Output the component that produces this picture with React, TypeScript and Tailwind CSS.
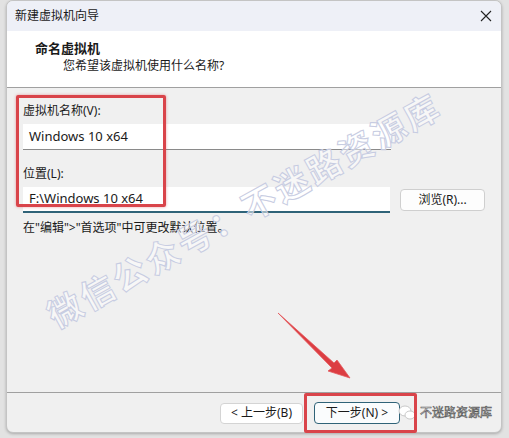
import React from "react";

const font = "font-['Noto_Sans','Noto_Sans_CJK_SC',sans-serif]";

const WizardDialog = () => {
  return (
    <div className={`relative w-[509px] h-[438px] bg-[#e2e2e2] pl-[6px] pr-[7px] pb-[5px] overflow-hidden ${font} text-[#1a1a1a]`}>
      <div className="flex flex-col h-full rounded-[7px] border border-[#c4c4c4] bg-[#f0f0f0] overflow-hidden shadow-[0_1px_3px_rgba(0,0,0,0.25)]">
        {/* title bar */}
        <div className="h-[30px] shrink-0 flex items-center justify-between bg-[#eef0f7] pl-[8px] pr-[9px]">
          <span className="text-[12px]">新建虚拟机向导</span>
          <svg width="12" height="12" viewBox="0 0 12 12" className="text-[#222]">
            <path d="M1 1 L11 11 M11 1 L1 11" stroke="currentColor" strokeWidth="1.1" />
          </svg>
        </div>

        {/* header */}
        <div className="h-[57px] shrink-0 bg-white border-b border-[#a0a0a0] pl-[28px] pt-[8px]">
          <div className="text-[13px] font-bold leading-[18px]">命名虚拟机</div>
          <div className="text-[12px] leading-[17px] pl-[28px]">您希望该虚拟机使用什么名称?</div>
        </div>

        {/* body */}
        <div className="flex-1 px-[16px] pt-[14px]">
          <div className="text-[12px] leading-[18px]">虚拟机名称(V):</div>
          <div className="mt-[4px] w-[368px] h-[26px] bg-white border-b border-[#8a8a8a] flex items-center pl-[6px] text-[13px]">
            Windows 10 x64
          </div>
          <div className="mt-[15px] text-[12px] leading-[18px]">位置(L):</div>
          <div className="mt-[4px] flex items-start gap-[10px]">
            <div className="w-[368px] h-[26px] bg-white border-b-2 border-[#2f6378] flex items-center pl-[6px] text-[13px]">
              F:\Windows 10 x64
            </div>
            <button className="mt-[2px] w-[85px] h-[22px] rounded-[4px] border border-[#cfcfcf] bg-[#fdfdfd] text-[12px] flex items-center justify-center">
              浏览(R)...
            </button>
          </div>
          <div className="mt-[6px] text-[12px] leading-[18px]">在"编辑"&gt;"首选项"中可更改默认位置。</div>
        </div>

        {/* footer */}
        <div className="h-[40px] shrink-0 border-t border-[#a0a0a0] flex items-center justify-end gap-[11px] pr-[101px] pt-[1px]">
          <button className="w-[83px] h-[21px] rounded-[4px] border border-[#d4d4d4] bg-white text-[12px] flex items-center justify-center">
            &lt; 上一步(B)
          </button>
          <button className="w-[86px] h-[22px] rounded-[4px] border border-[#2f6378] bg-[#fafcfd] text-[12px] flex items-center justify-center">
            下一步(N) &gt;
          </button>
        </div>
      </div>

      {/* diagonal watermark */}
      <div className="absolute left-[50px] top-[296px] h-[44px] leading-[44px] -rotate-[29deg] origin-left whitespace-nowrap text-[34px] font-bold tracking-[3px] text-white/50 [-webkit-text-stroke:1px_#c7cce2] pointer-events-none">
        微信公众号：不迷路资源库
      </div>

      {/* corner watermark */}
      <div className="absolute left-[398px] top-[404px] flex items-center gap-[4px] pointer-events-none">
        <svg width="18" height="16" viewBox="0 0 18 16">
          <ellipse cx="7" cy="6" rx="6" ry="5" fill="white" stroke="#bbb" strokeWidth="0.8" />
          <ellipse cx="12" cy="10" rx="5" ry="4" fill="white" stroke="#bbb" strokeWidth="0.8" />
        </svg>
        <span className="text-[12px] text-white [-webkit-text-stroke:0.6px_#555]">不迷路资源库</span>
      </div>

      {/* red highlight boxes */}
      <div className="absolute left-[16px] top-[95px] w-[150px] h-[112px] border-[3px] border-[#d9444a] rounded-[2px] shadow-[0_0_3px_rgba(217,68,74,0.5)] pointer-events-none" />
      <div className="absolute left-[304px] top-[393px] w-[113px] h-[40px] border-[3px] border-[#d9444a] rounded-[2px] pointer-events-none" />

      {/* red arrow */}
      <svg className="absolute left-[270px] top-[305px] pointer-events-none" width="90" height="80" viewBox="0 0 90 80">
        <path d="M8 8 L64 58 L67 55 L80 73 L58 66 L62 63 L8 8 Z" fill="#dc3d42" stroke="#e45a5e" strokeWidth="0.8" strokeLinejoin="round" />
      </svg>
    </div>
  );
};

export default function App() {
  return <WizardDialog />;
}
